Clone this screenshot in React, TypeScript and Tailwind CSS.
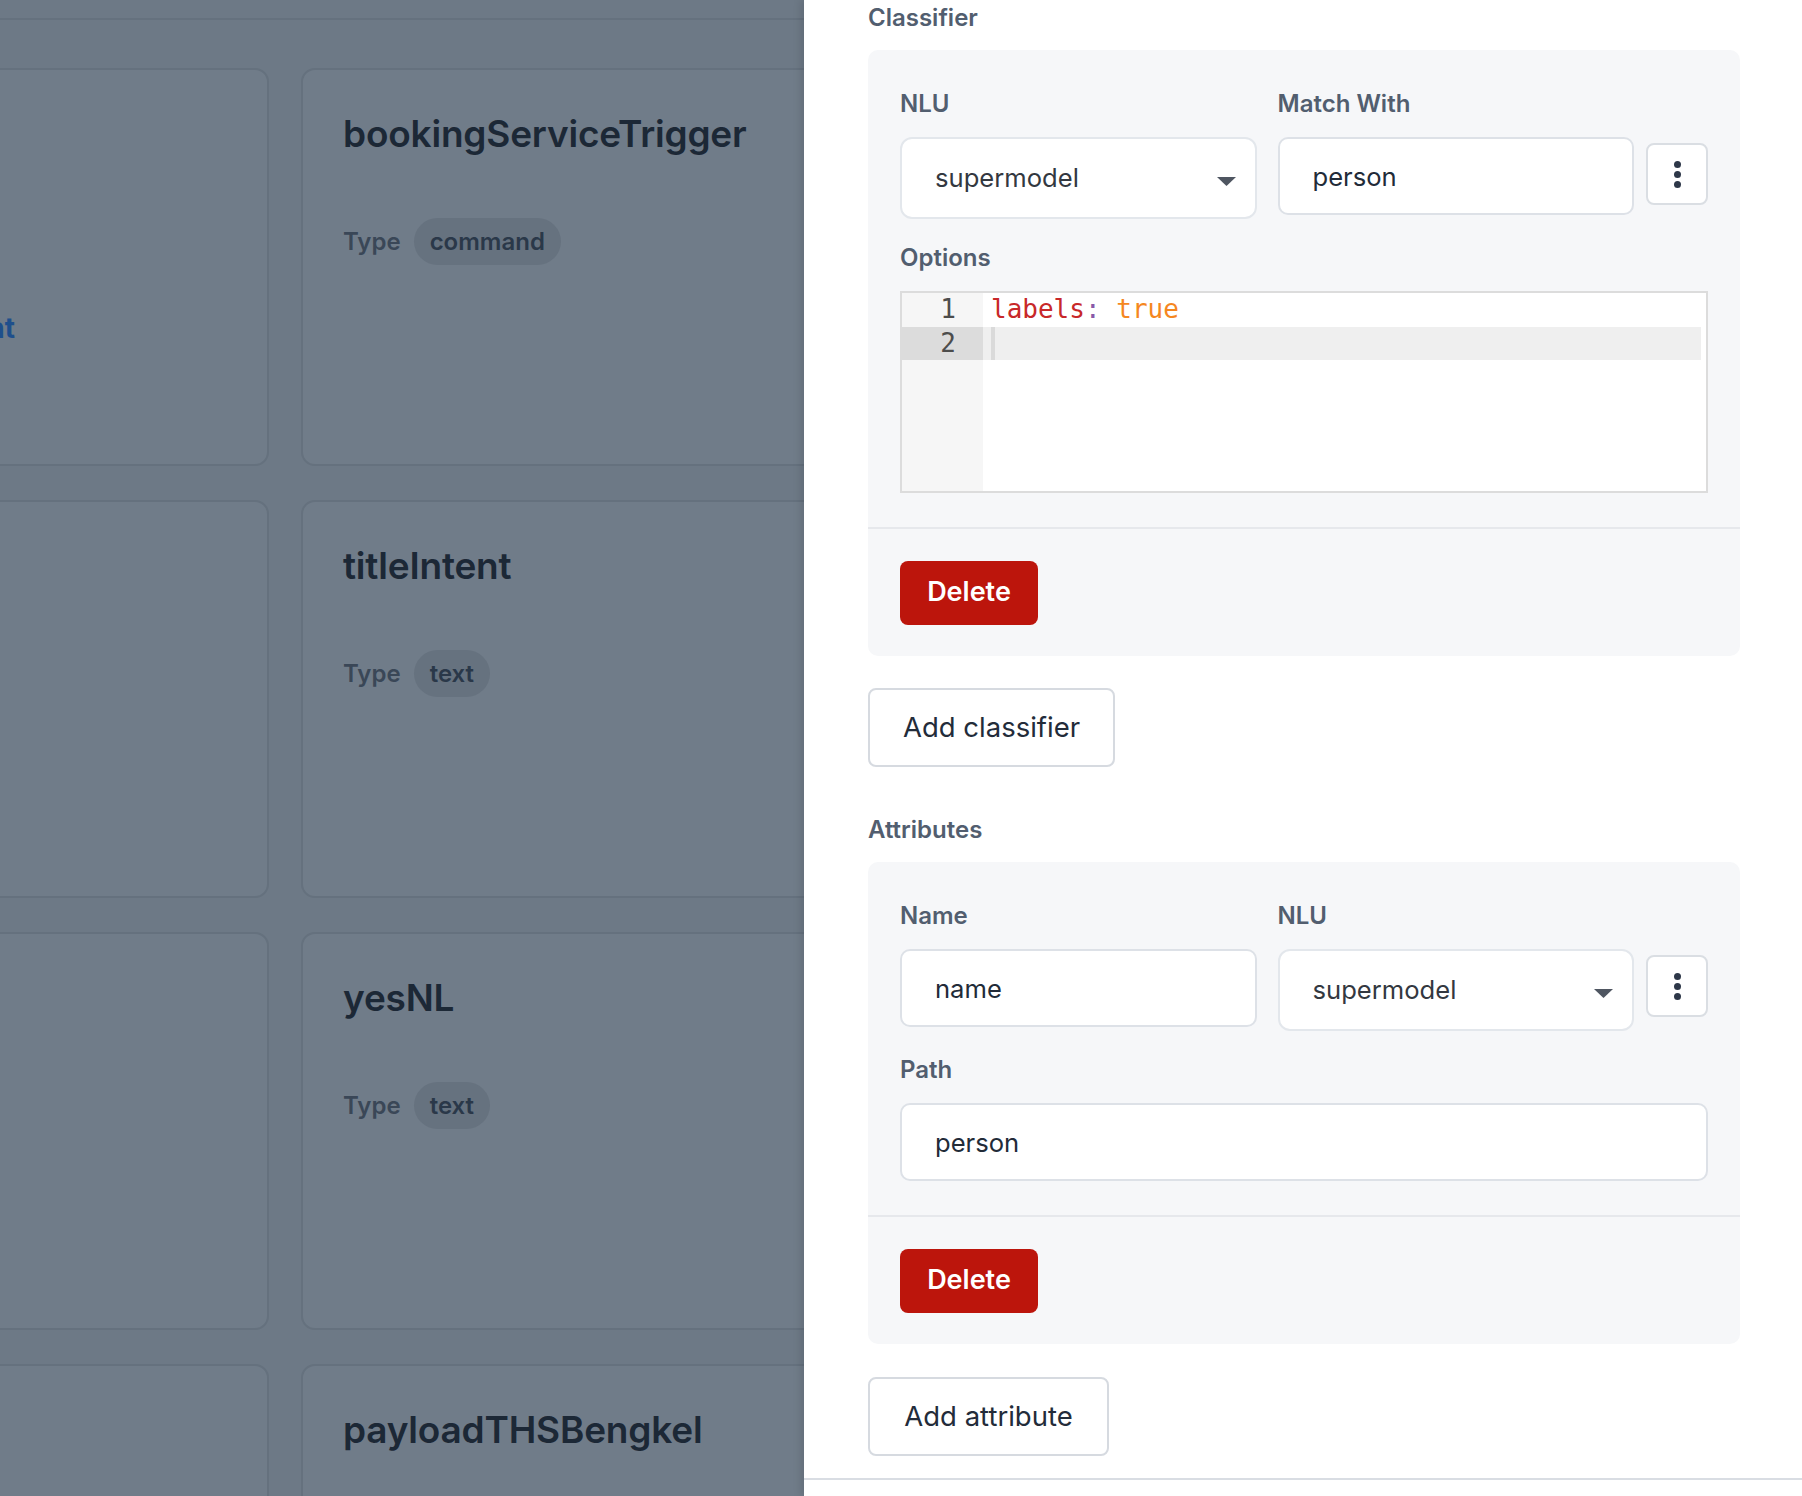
import React from "react";

const intents = [
  { name: "bookingServiceTrigger", type: "command" },
  { name: "titleIntent", type: "text" },
  { name: "yesNL", type: "text" },
  { name: "payloadTHSBengkel", type: "" },
];

function IntentsBackdrop() {
  return (
    <div className="w-[804px] shrink-0 overflow-hidden bg-[#6d7986]">
      {/* page header edge */}
      <div className="h-[20px] border-b-2 border-[#65717e]" />

      <div className="mt-[48px] ml-[-251px] grid grid-cols-[520px_520px] gap-x-[32px] gap-y-[34px]">
        {intents.map((intent, i) => (
          <React.Fragment key={intent.name}>
            <div className="flex h-[398px] justify-end rounded-[14px] border-2 border-[#65717e] bg-[#707c89] pt-[240px] pr-[252px]">
              {i === 0 && (
                <p className="text-[28px] font-bold leading-9 text-[#1e4f8c] whitespace-nowrap">
                  Create a new intent
                </p>
              )}
            </div>
            <div className="h-[398px] rounded-[14px] border-2 border-[#65717e] bg-[#707c89] px-[40px] pt-[42px]">
              <h3 className="text-[37px] font-semibold leading-[44px] tracking-[-0.2px] text-[#1c2836]">
                {intent.name}
              </h3>
              {intent.type && (
                <div className="mt-[62px] flex items-center gap-[13px]">
                  <span className="text-[24px] font-semibold text-[#3a4757]">Type</span>
                  <span className="rounded-full bg-[#66727f] px-[16px] text-[24px] font-semibold leading-[47px] text-[#2a3849]">
                    {intent.type}
                  </span>
                </div>
              )}
            </div>
          </React.Fragment>
        ))}
      </div>
    </div>
  );
}

function Label({ children }: { children: React.ReactNode }) {
  return (
    <label className="mb-[15px] block text-[24px] font-semibold leading-9 text-[#525e6f]">
      {children}
    </label>
  );
}

function SelectBox({ value }: { value: string }) {
  return (
    <div className="flex h-[82px] items-center justify-between rounded-[12px] border-2 border-[#e3e7ec] bg-white pl-[33px] pr-[19px]">
      <span className="text-[25.6px] text-[#333840]">{value}</span>
      <svg width="19" height="9" viewBox="0 0 19 9" className="mt-[6px]">
        <path d="M0 0h19L9.5 9z" fill="#4f5661" />
      </svg>
    </div>
  );
}

function TextBox({ value }: { value: string }) {
  return (
    <input
      readOnly
      value={value}
      className="h-[78px] w-full rounded-[10px] border-2 border-[#dde1e7] bg-white pl-[33px] text-[25.6px] text-[#222b38] outline-none"
    />
  );
}

function Kebab() {
  return (
    <button className="ml-[12px] mt-[57px] flex h-[62px] w-[62px] shrink-0 flex-col items-center justify-center gap-[3px] rounded-[8px] border-2 border-[#dadee3] bg-white">
      <span className="h-[7px] w-[7px] rounded-full bg-[#2d3748]" />
      <span className="h-[7px] w-[7px] rounded-full bg-[#2d3748]" />
      <span className="h-[7px] w-[7px] rounded-full bg-[#2d3748]" />
    </button>
  );
}

function Panel({ children }: { children: React.ReactNode }) {
  return (
    <div className="mt-[14px] rounded-[10px] bg-[#f6f7f9]">
      <div className="px-8 pt-9 pb-[34px]">{children}</div>
      <div className="border-t-2 border-[#e6e8ec] px-8 py-[31.5px]">
        <button className="h-[64px] w-[138px] rounded-[8px] bg-[#bc150c] text-[27px] font-semibold text-white">
          Delete
        </button>
      </div>
    </div>
  );
}

function SectionTitle({ children, className = "" }: { children: React.ReactNode; className?: string }) {
  return (
    <h2 className={`text-[24px] font-semibold leading-9 text-[#525e6f] ${className}`}>{children}</h2>
  );
}

function OptionsEditor() {
  return (
    <div className="flex h-[202px] border-2 border-[#dcdcdc] bg-white font-['DejaVu_Sans_Mono',monospace] text-[26px] leading-[33.5px]">
      <div className="w-[81px] shrink-0 bg-[#f6f6f6] text-right text-[#4d4d4c]">
        <div className="pr-[27px]">1</div>
        <div className="bg-[#dcdcdc] pr-[27px]">2</div>
      </div>
      <div className="flex-1 pr-[5px]">
        <div className="whitespace-pre pl-[8px]">
          <span className="text-[#c82829]">labels</span>
          <span className="text-[#8959a8]">:</span>{" "}
          <span className="text-[#f5871f]">true</span>
        </div>
        <div className="h-[33.5px] bg-[#efefef] pl-[8px]">
          <div className="h-full w-[4px] bg-[#dadada]" />
        </div>
      </div>
    </div>
  );
}

function OutlineButton({ children, className = "" }: { children: React.ReactNode; className?: string }) {
  return (
    <button
      className={`rounded-[8px] border-2 border-[#d6dae0] bg-white text-[27.5px] text-[#232c3a] ${className}`}
    >
      {children}
    </button>
  );
}

function Drawer() {
  return (
    <aside className="relative flex flex-1 flex-col bg-white shadow-[-3px_0_8px_rgba(0,0,0,0.12)]">
      <div className="h-[1478px] overflow-hidden pl-16 pr-[62px]">
        <SectionTitle>Classifier</SectionTitle>
        <Panel>
          <div className="flex items-start">
            <div className="grid flex-1 grid-cols-2 gap-[21px]">
              <div>
                <Label>NLU</Label>
                <SelectBox value="supermodel" />
              </div>
              <div>
                <Label>Match With</Label>
                <TextBox value="person" />
              </div>
            </div>
            <Kebab />
          </div>
          <div className="mt-[21px]">
            <Label>Options</Label>
            <OptionsEditor />
          </div>
        </Panel>

        <OutlineButton className="mt-8 h-[79px] w-[247px]">Add classifier</OutlineButton>

        <SectionTitle className="mt-[45px]">Attributes</SectionTitle>
        <Panel>
          <div className="flex items-start">
            <div className="grid flex-1 grid-cols-2 gap-[21px]">
              <div>
                <Label>Name</Label>
                <TextBox value="name" />
              </div>
              <div>
                <Label>NLU</Label>
                <SelectBox value="supermodel" />
              </div>
            </div>
            <Kebab />
          </div>
          <div className="mt-[21px]">
            <Label>Path</Label>
            <TextBox value="person" />
          </div>
        </Panel>

        <OutlineButton className="mt-[33px] h-[78.5px] w-[241px]">Add attribute</OutlineButton>
      </div>
      <div className="flex-1 border-t-2 border-[#d9dde3]" />
    </aside>
  );
}

export default function App() {
  return (
    <div className="flex h-[1496px] w-[1802px] overflow-hidden font-['Inter',sans-serif]">
      <IntentsBackdrop />
      <Drawer />
    </div>
  );
}
